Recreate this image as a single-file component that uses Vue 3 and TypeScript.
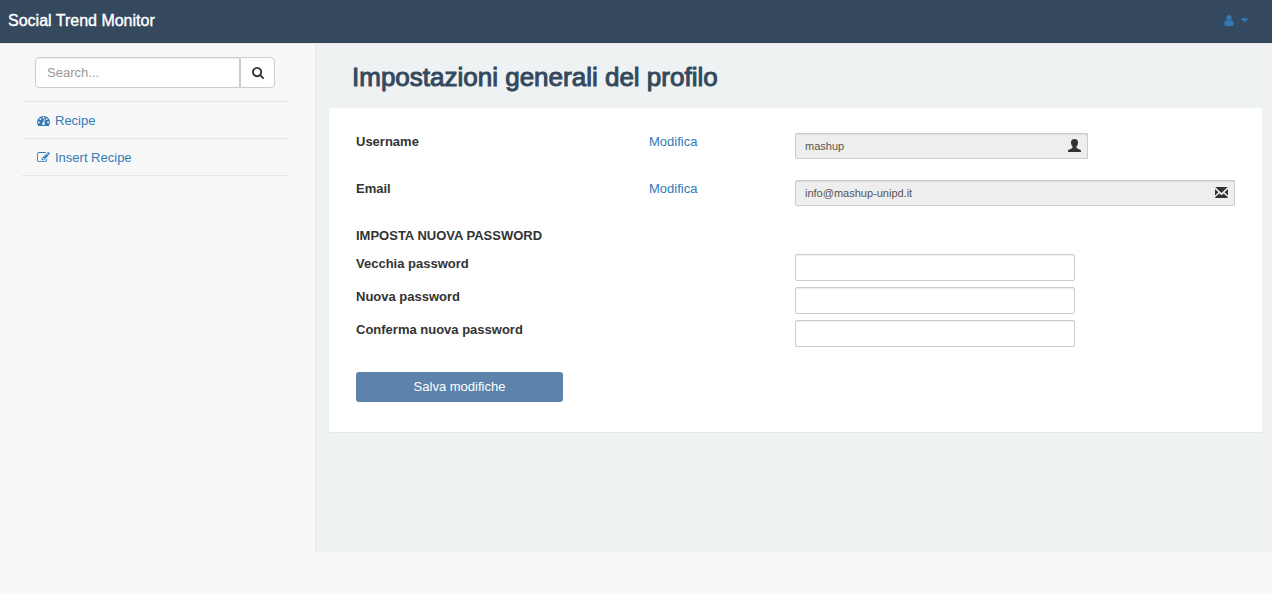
<script setup lang="ts">
import { ref } from 'vue'

interface AccountField {
  id: string
  label: string
  type: string
  value: string
  icon: 'user' | 'mail'
}

interface PasswordField {
  id: string
  label: string
}

const search = ref('')

const accountFields: AccountField[] = [
  { id: 'username', label: 'Username', type: 'text', value: 'mashup', icon: 'user' },
  { id: 'email', label: 'Email', type: 'email', value: 'info@mashup-unipd.it', icon: 'mail' },
]

const passwordFields: PasswordField[] = [
  { id: 'old-password', label: 'Vecchia password' },
  { id: 'new-password', label: 'Nuova password' },
  { id: 'confirm-password', label: 'Conferma nuova password' },
]

const passwords = ref<Record<string, string>>({
  'old-password': '',
  'new-password': '',
  'confirm-password': '',
})
</script>

<template>
  <div class="page">
    <header class="topbar">
      <a class="brand" href="#">Social Trend Monitor</a>
      <button class="account" type="button" aria-label="Account">
        <svg class="account-icon" viewBox="256 128 1280 1536" aria-hidden="true">
          <path d="M1536 1399q0 109-62.5 187t-150.5 78h-854q-88 0-150.5-78t-62.5-187q0-85 8.5-160.5t31.5-152 58.5-131 94-89 134.5-34.5q131 128 313 128t313-128q76 0 134.5 34.5t94 89 58.5 131 31.5 152 8.5 160.5zm-256-887q0 159-112.5 271.5t-271.5 112.5-271.5-112.5-112.5-271.5 112.5-271.5 271.5-112.5 271.5 112.5 112.5 271.5z" />
        </svg>
        <svg class="caret" viewBox="0 0 8 5" aria-hidden="true">
          <path d="M.7 0h6.6q.7 0 .7.5 0 .3-.2.5L4.5 4.2q-.5.5-1 0L.2 1Q0 .8 0 .5 0 0 .7 0z" />
        </svg>
      </button>
    </header>

    <div class="body">
      <nav class="sidebar">
        <form class="search" role="search" @submit.prevent>
          <input v-model="search" class="search-input" type="text" placeholder="Search..." aria-label="Search" />
          <button class="search-button" type="submit" aria-label="Search">
            <svg viewBox="64 128 1664 1664" aria-hidden="true">
              <path d="M1216 832q0-185-131.500-316.500t-316.500-131.500-316.500 131.500-131.500 316.500 131.500 316.500 316.500 131.500 316.500-131.500 131.500-316.500zm512 832q0 52-38 90t-90 38q-54 0-90-38l-343-342q-179 124-399 124-143 0-273.500-55.500t-225-150-150-225-55.500-273.500 55.500-273.500 150-225 225-150 273.500-55.500 273.500 55.500 225 150 150 225 55.500 273.500q0 220-124 399l343 343q37 37 37 90z" />
            </svg>
          </button>
        </form>
        <ul class="menu">
          <li>
            <a href="#">
              <svg viewBox="0 128 1792 1536" aria-hidden="true">
                <path d="M384 1152q0-53-37.500-90.500t-90.500-37.500-90.500 37.500-37.500 90.500 37.500 90.500 90.500 37.500 90.500-37.500 37.500-90.500zm192-448q0-53-37.500-90.500t-90.500-37.500-90.500 37.500-37.500 90.500 37.500 90.500 90.500 37.500 90.500-37.500 37.500-90.500zm428 481l101-382q6-26-7.500-48.500t-38.500-29.500-48 6.500-30 39.500l-101 382q-60 5-107 43.500t-63 98.500q-20 77 20 146t117 89 146-20 89-117q16-60-6-117t-72-91zm660-33q0-53-37.500-90.500t-90.500-37.500-90.500 37.500-37.500 90.500 37.500 90.500 90.500 37.500 90.500-37.500 37.500-90.500zm-640-640q0-53-37.500-90.500t-90.500-37.500-90.500 37.500-37.500 90.500 37.500 90.500 90.500 37.500 90.500-37.500 37.500-90.500zm448 192q0-53-37.500-90.500t-90.500-37.500-90.500 37.500-37.500 90.500 37.500 90.500 90.500 37.500 90.500-37.500 37.500-90.500zm320 448q0 261-141 483-19 29-54 29h-1402q-35 0-54-29-141-221-141-483 0-182 71-348t191-286 286-191 348-71 348 71 286 191 191 286 71 348z" />
              </svg>
              Recipe
            </a>
          </li>
          <li>
            <a href="#">
              <svg viewBox="0 128 1792 1536" aria-hidden="true">
                <path d="M888 1184l116-116-152-152-116 116v56h96v96h56zm440-720q-16-16-33 1l-350 350q-17 17-1 33t33-1l350-350q17-17 1-33zm80 594v190q0 119-84.500 203.500t-203.500 84.500h-832q-119 0-203.500-84.500t-84.500-203.500v-832q0-119 84.500-203.500t203.500-84.500h832q63 0 117 25 15 7 18 23 3 17-9 29l-49 49q-14 14-32 8-23-6-45-6h-832q-66 0-113 47t-47 113v832q0 66 47 113t113 47h832q66 0 113-47t47-113v-126q0-13 9-22l64-64q15-15 35-7t20 29zm-96-738l288 288-672 672h-288v-288zm444 132l-92 92-288-288 92-92q28-28 68-28t68 28l152 152q28 28 28 68t-28 68z" />
              </svg>
              Insert Recipe
            </a>
          </li>
        </ul>
      </nav>

      <main class="content">
        <h1>Impostazioni generali del profilo</h1>
        <form class="card" @submit.prevent>
          <div v-for="field in accountFields" :key="field.id" class="row account-row">
            <label :for="field.id">{{ field.label }}</label>
            <a href="#">Modifica</a>
            <div class="field" :class="`field-${field.id}`">
              <input :id="field.id" class="control" :type="field.type" :value="field.value" disabled />
              <svg v-if="field.icon === 'user'" class="field-icon" viewBox="0 0 13 13" aria-hidden="true">
                <path d="M6.500 0C8.900 0 10 1.400 10 3.500c0 1.900-.7 3.200-1.500 4.100v1c0 .5.300.7.800.9l2.400 1.100c.9.400 1.300.9 1.300 1.700v.7H0v-.7c0-.8.4-1.300 1.300-1.700l2.400-1.100c.5-.2.800-.4.800-.9v-1C3.700 6.700 3 5.400 3 3.500 3 1.400 4.100 0 6.500 0z" />
              </svg>
              <svg v-else class="field-icon" viewBox="0 0 13 13" aria-hidden="true">
                <path d="M.3 1h12.400L6.500 7zM0 2.900 3.400 6.200 0 9.500zM13 2.900v6.600L9.600 6.200zM4.400 7.400l2.100 1.900 2.100-1.900 4.100 3.700v.9H.3v-.9z" />
              </svg>
            </div>
          </div>

          <h2>IMPOSTA NUOVA PASSWORD</h2>

          <div v-for="field in passwordFields" :key="field.id" class="row password-row">
            <label :for="field.id">{{ field.label }}</label>
            <input :id="field.id" v-model="passwords[field.id]" class="control password" type="password" />
          </div>

          <button class="save" type="submit">Salva modifiche</button>
        </form>
      </main>
    </div>
  </div>
</template>

<style>
body {
  background: #f8f8f8;
}
</style>

<style scoped>
.page,
.page * {
  box-sizing: border-box;
}

.page {
  font-family: "Liberation Sans", Arial, sans-serif;
  font-size: 13px;
  line-height: 18px;
  color: #333;
}

input,
button {
  font: inherit;
}

a {
  color: #337ab7;
  text-decoration: none;
}

svg {
  fill: currentColor;
  flex: none;
}

.topbar {
  display: flex;
  align-items: center;
  justify-content: space-between;
  height: 44px;
  padding: 0 24px 2px 8px;
  background: #34495e;
  border-bottom: 1px solid #e7e7e7;
}

.brand {
  color: #fff;
  font-size: 16px;
  -webkit-text-stroke: 0.4px #fff;
}

.account {
  display: flex;
  align-items: center;
  gap: 7px;
  padding: 0;
  border: 0;
  background: none;
  color: #337ab7;
}

.account-icon {
  width: 10px;
  height: 11px;
}

.caret {
  width: 7px;
  height: 5px;
}

.body {
  display: flex;
  min-height: 508px;
}

.sidebar {
  flex: none;
  width: 315px;
  padding: 13px 27px 0 22px;
}

.search {
  display: flex;
  padding: 0 13px;
}

.search-input {
  flex: 1;
  min-width: 0;
  height: 31px;
  padding: 0 11px;
  border: 1px solid #ccc;
  border-radius: 4px 0 0 4px;
  background: #fff;
  box-shadow: inset 0 1px 1px rgba(0, 0, 0, 0.075);
  color: #555;
}

.search-input::placeholder {
  color: #999;
  opacity: 1;
}

.search-button {
  display: flex;
  align-items: center;
  justify-content: center;
  width: 35px;
  padding: 0;
  border: 1px solid #ccc;
  border-radius: 0 4px 4px 0;
  background: #fff;
  color: #333;
}

.search-button svg {
  width: 12px;
  height: 12px;
}

.menu {
  margin: 13px 0 0;
  padding: 0;
  list-style: none;
  border-top: 1px solid #e7e7e7;
}

.menu li {
  border-bottom: 1px solid #e7e7e7;
}

.menu a {
  display: flex;
  align-items: center;
  gap: 5px;
  height: 36px;
  padding: 1px 15px 0;
}

.menu svg {
  width: 13px;
  height: 11px;
}

.content {
  flex: 1;
  min-width: 0;
  padding: 18px 10px 24px 13px;
  border-left: 1px solid #e7e7e7;
  background: #eef2f3;
}

h1 {
  margin: 0 23px 16px;
  color: #34495e;
  font-size: 26px;
  line-height: 30px;
  font-weight: 400;
  -webkit-text-stroke: 1px #34495e;
}

.card {
  padding: 25px 27px 30px;
  background: #fff;
  border-bottom: 1px solid #e3e8e9;
}

.row {
  display: grid;
  grid-template-columns: 293px 146px 1fr;
  align-items: start;
}

label,
h2 {
  font-size: 13px;
  line-height: 18px;
  font-weight: 700;
}

.account-row {
  height: 47px;
}

.field {
  position: relative;
}

.field-username {
  width: 66.6667%;
}

.control {
  display: block;
  width: 100%;
  height: 27px;
  padding: 0 9px;
  border: 1px solid #ccc;
  border-radius: 2px;
  background: #fff;
  box-shadow: inset 0 1px 1px rgba(0, 0, 0, 0.075);
  color: #555;
  font-size: 11px;
}

.control:disabled {
  height: 26px;
  padding-right: 32px;
  border-radius: 2px 0 0 2px;
  background: #eee;
  opacity: 1;
}

.field-icon {
  position: absolute;
  top: 6px;
  right: 7px;
  width: 13px;
  height: 13px;
}

h2 {
  margin: 0 0 9px;
}

.password-row {
  margin-bottom: 6px;
}

.password-row label {
  line-height: 20px;
}

.password {
  grid-column: 3;
  max-width: 280px;
}

.save {
  display: block;
  width: 207px;
  height: 30px;
  margin-top: 25px;
  padding: 0;
  border: 0;
  border-radius: 3px;
  background: #5d83aa;
  color: #fff;
}
</style>
